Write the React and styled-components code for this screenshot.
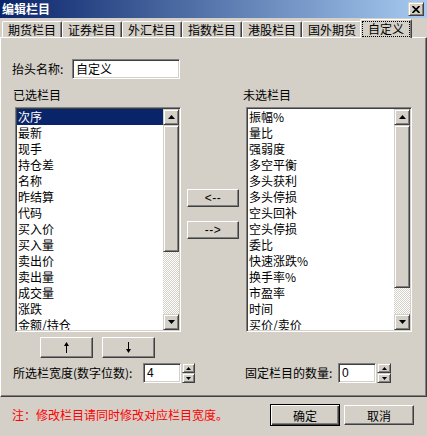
import React from 'react'
import styled, { createGlobalStyle, css } from 'styled-components'

const GlobalStyle = createGlobalStyle`
  html, body {
    margin: 0;
    padding: 0;
    background: #d4d0c8;
  }
  body {
    font-family: "Noto Sans CJK SC", "Liberation Sans", sans-serif;
    font-size: 12px;
    color: #000;
  }
`

// classic 3d bevels
const pushBevel = css`
  border: 1px solid;
  border-color: #fff #404040 #404040 #fff;
  box-shadow: inset -1px -1px #808080, inset 1px 1px #d4d0c8;
`

const scrollBevel = css`
  border: 1px solid;
  border-color: #d4d0c8 #404040 #404040 #d4d0c8;
  box-shadow: inset 1px 1px #fff, inset -1px -1px #808080;
`

const sunken = css`
  border: 1px solid;
  border-color: #808080 #fff #fff #808080;
  box-shadow: inset 1px 1px #404040, inset -1px -1px #d4d0c8;
`

const Window = styled.div`
  width: 427px;
  height: 436px;
  overflow: hidden;
  background: #d4d0c8;
  display: flex;
  flex-direction: column;
`

const TitleBar = styled.div`
  flex: none;
  height: 18px;
  box-sizing: border-box;
  padding: 0 3px 0 2px;
  display: flex;
  align-items: center;
  justify-content: space-between;
  background: linear-gradient(to right, #0a246a, #a6caf0);
  color: #fff;
  font-weight: bold;
  font-size: 12px;
  line-height: 18px;
`

const CloseButton = styled.div`
  box-sizing: border-box;
  width: 16px;
  height: 14px;
  background: #d4d0c8;
  ${scrollBevel};
  display: flex;
  align-items: center;
  justify-content: center;
`

const TabRow = styled.div`
  flex: none;
  height: 18px;
  margin-top: 1px;
  padding-left: 2px;
  display: flex;
  align-items: flex-end;
`

const Tab = styled.div`
  box-sizing: border-box;
  width: ${(p) => p.$w}px;
  height: 16px;
  border-top: 1px solid #fff;
  border-left: 1px solid #fff;
  border-right: 1px solid #404040;
  box-shadow: inset -1px 0 #808080;
  border-radius: 2px 2px 0 0;
  text-align: center;
  line-height: 15px;
  white-space: nowrap;
  background: #d4d0c8;

  ${(p) =>
    p.$active &&
    css`
      height: 19px;
      margin: 0 -2px -1px -2px;
      position: relative;
      z-index: 1;
      padding: 1px 1px 0 1px;
    `}
`

const Focus = styled.div`
  height: 16px;
  border: 1px dotted #000;
  box-sizing: border-box;
  line-height: 14px;
`

const Panel = styled.div`
  flex: none;
  box-sizing: border-box;
  height: 360px;
  border-top: 1px solid #fff;
  border-left: 1px solid #fff;
  border-right: 1px solid #404040;
  border-bottom: 1px solid #404040;
  box-shadow: inset -1px -1px #808080;
  padding: 21px 0 0 14px;
`

const NameRow = styled.div`
  display: flex;
  align-items: center;
  height: 20px;
  margin-left: -3px;
`

const Label = styled.div`
  width: ${(p) => p.$w}px;
  flex: none;
  white-space: nowrap;
  line-height: 20px;
`

const Field = styled.div`
  box-sizing: border-box;
  width: ${(p) => p.$w}px;
  height: 20px;
  background: #fff;
  ${sunken};
  padding-left: 3px;
  line-height: 18px;
  font-family: ${(p) => (p.$num ? '"Liberation Sans", sans-serif' : 'inherit')};
  font-size: 12px;
`

const Columns = styled.div`
  display: flex;
  margin-top: 8px;
`

const Col = styled.div`
  width: 166px;
  flex: none;
  display: flex;
  flex-direction: column;
  margin-left: ${(p) => p.$ml || 0}px;
`

const ColLabel = styled.div`
  height: 16px;
  line-height: 16px;
  margin: 0 0 4px ${(p) => p.$ml}px;
`

const MidCol = styled.div`
  width: 52px;
  flex: none;
  margin-left: 6px;
  padding-top: 102px;
  display: flex;
  flex-direction: column;
  gap: 14px;
`

const PushButton = styled.div`
  box-sizing: border-box;
  width: ${(p) => p.$w}px;
  height: ${(p) => p.$h}px;
  background: #d4d0c8;
  ${pushBevel};
  display: flex;
  align-items: center;
  justify-content: center;
  font-size: 12px;
  line-height: 1;
  white-space: nowrap;
`

const MoveText = styled.span`
  font-family: "Liberation Sans", sans-serif;
  letter-spacing: 0.5px;
`

const ListBox = styled.div`
  box-sizing: border-box;
  height: 225px;
  padding: 1px;
  background: #fff;
  ${sunken};
  display: flex;
`

const Items = styled.div`
  flex: 1;
  overflow: hidden;
`

const Item = styled.div`
  height: 16px;
  line-height: 16px;
  padding-left: 1px;
  white-space: nowrap;

  ${(p) =>
    p.$selected &&
    css`
      background: #0a246a;
      color: #fff;
    `}
`

const ScrollBar = styled.div`
  width: 16px;
  flex: none;
  display: flex;
  flex-direction: column;
`

const ScrollBtn = styled.div`
  box-sizing: border-box;
  height: 16px;
  flex: none;
  background: #d4d0c8;
  ${scrollBevel};
  display: flex;
  align-items: center;
  justify-content: center;
`

const Thumb = styled.div`
  box-sizing: border-box;
  flex: none;
  background: #d4d0c8;
  ${scrollBevel};
`

const Track = styled.div`
  flex: 1;
  background-color: #d4d0c8;
  background-image: conic-gradient(#fff 25%, transparent 0 50%, #fff 0 75%, transparent 0);
  background-size: 2px 2px;
`

const OrderRow = styled.div`
  display: flex;
  gap: 9px;
  margin: 5px 0 0 25px;
`

const SpinRow = styled.div`
  display: flex;
  margin: 5px 0 0 -2px;
  height: 20px;
`

const SpinGroup = styled.div`
  display: flex;
  align-items: center;
  width: ${(p) => p.$w}px;
  flex: none;
`

const Spin = styled.div`
  width: ${(p) => p.$w}px;
  margin-left: ${(p) => p.$ml}px;
  height: 20px;
  display: flex;
  flex-direction: column;
`

const SpinBtn = styled.div`
  box-sizing: border-box;
  height: 10px;
  background: #d4d0c8;
  ${scrollBevel};
  display: flex;
  align-items: center;
  justify-content: center;
`

const Footer = styled.div`
  flex: 1;
  display: flex;
  align-items: flex-start;
  padding: 7px 13px 0 12px;
  gap: 4px;
`

const Note = styled.div`
  flex: 1;
  color: #ff0000;
  line-height: 22px;
  white-space: nowrap;
`

const DialogButton = styled.div`
  box-sizing: border-box;
  width: 70px;
  height: 20px;
  margin-top: 1px;
  background: #d4d0c8;
  ${pushBevel};
  display: flex;
  align-items: center;
  justify-content: center;

  ${(p) =>
    p.$default &&
    css`
      height: 22px;
      margin-top: 0;
      border: 1px solid #000;
      box-shadow: inset 1px 1px #fff, inset -1px -1px #404040, inset -2px -2px #808080;
    `}
`

const Tri = ({ down, w = 7, h = 4 }) => (
  <svg width={w} height={h} viewBox={`0 0 ${w} ${h}`}>
    <polygon
      points={down ? `0,0 ${w},0 ${w / 2},${h}` : `0,${h} ${w},${h} ${w / 2},0`}
      fill="#000"
    />
  </svg>
)

const Arrow = ({ down }) => (
  <svg width="5" height="11" viewBox="0 0 5 11">
    <g transform={down ? 'rotate(180 2.5 5.5)' : undefined}>
      <rect x="2" y="2" width="1" height="9" fill="#000" />
      <polygon points="0,4 5,4 2.5,0" fill="#000" />
    </g>
  </svg>
)

const List = ({ items, thumb, selected }) => (
  <ListBox>
    <Items>
      {items.map((t, i) => (
        <Item key={t} $selected={i === selected}>
          {t}
        </Item>
      ))}
    </Items>
    <ScrollBar>
      <ScrollBtn>
        <Tri />
      </ScrollBtn>
      <Thumb style={{ height: thumb }} />
      <Track />
      <ScrollBtn>
        <Tri down />
      </ScrollBtn>
    </ScrollBar>
  </ListBox>
)

const SpinBox = ({ w, ml }) => (
  <Spin $w={w} $ml={ml}>
    <SpinBtn>
      <Tri w={5} h={3} />
    </SpinBtn>
    <SpinBtn>
      <Tri down w={5} h={3} />
    </SpinBtn>
  </Spin>
)

const tabs = ['期货栏目', '证券栏目', '外汇栏目', '指数栏目', '港股栏目', '国外期货']

const chosen = [
  '次序', '最新', '现手', '持仓差', '名称', '昨结算', '代码',
  '买入价', '买入量', '卖出价', '卖出量', '成交量', '涨跌', '金额/持仓',
]

const unchosen = [
  '振幅%', '量比', '强弱度', '多空平衡', '多头获利', '多头停损', '空头回补',
  '空头停损', '委比', '快速涨跌%', '换手率%', '市盈率', '时间', '买价/卖价',
]

export default function App() {
  return (
    <Window>
      <GlobalStyle />
      <TitleBar>
        <span>编辑栏目</span>
        <CloseButton>
          <svg width="8" height="7" viewBox="0 0 8 7">
            <path d="M0.5 0 L7.5 7 M7.5 0 L0.5 7" stroke="#000" strokeWidth="1.7" />
          </svg>
        </CloseButton>
      </TitleBar>

      <TabRow>
        {tabs.map((t) => (
          <Tab key={t} $w={60}>
            {t}
          </Tab>
        ))}
        <Tab $w={52} $active>
          <Focus>自定义</Focus>
        </Tab>
      </TabRow>

      <Panel>
        <NameRow>
          <Label $w={60}>抬头名称:</Label>
          <Field $w={108}>自定义</Field>
        </NameRow>

        <Columns>
          <Col>
            <ColLabel $ml={-2}>已选栏目</ColLabel>
            <List items={chosen} thumb={127} selected={0} />
            <OrderRow>
              <PushButton $w={53} $h={21}>
                <Arrow />
              </PushButton>
              <PushButton $w={53} $h={21}>
                <Arrow down />
              </PushButton>
            </OrderRow>
          </Col>

          <MidCol>
            <PushButton $w={52} $h={18}>
              <MoveText>&lt;--</MoveText>
            </PushButton>
            <PushButton $w={52} $h={18}>
              <MoveText>--&gt;</MoveText>
            </PushButton>
          </MidCol>

          <Col $ml={7}>
            <ColLabel $ml={-3}>未选栏目</ColLabel>
            <List items={unchosen} thumb={163} />
          </Col>
        </Columns>

        <SpinRow>
          <SpinGroup $w={232}>
            <Label $w={130}>所选栏宽度(数字位数):</Label>
            <Field $w={38} $num>4</Field>
            <SpinBox w={13} ml={1} />
          </SpinGroup>
          <SpinGroup>
            <Label $w={93}>固定栏目的数量:</Label>
            <Field $w={38} $num>0</Field>
            <SpinBox w={14} ml={1} />
          </SpinGroup>
        </SpinRow>
      </Panel>

      <Footer>
        <Note>注：修改栏目请同时修改对应栏目宽度。</Note>
        <DialogButton $default>确定</DialogButton>
        <DialogButton>取消</DialogButton>
      </Footer>
    </Window>
  )
}
